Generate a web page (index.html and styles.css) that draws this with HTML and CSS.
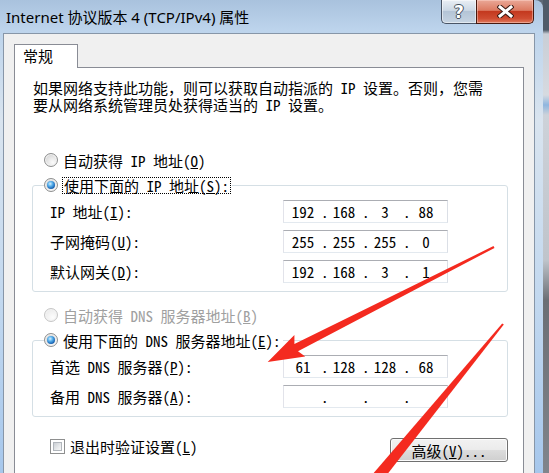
FILE: index.html
```html
<!DOCTYPE html>
<html lang="zh-CN">
<head>
    <meta charset="UTF-8">
    <meta name="viewport" content="width=device-width, initial-scale=1.0">
    <title>Internet 协议版本 4 (TCP/IPv4) 属性</title>
    <link rel="stylesheet" href="styles.css">
</head>
<body>
    <div class="screen">
        <div class="window">
            <div class="titlebar">
                <span class="title">Internet 协议版本 4 (TCP/IPv4) 属性</span>
                <div class="caption">
                    <span class="cap-btn help">?</span>
                    <span class="cap-btn close">
                        <svg width="17" height="13" viewBox="0 0 17 13">
                            <path d="M3 2 L14 11 M14 2 L3 11" stroke="#3a1a14" stroke-width="5" stroke-linecap="square"/>
                            <path d="M3 2 L14 11 M14 2 L3 11" stroke="#ffffff" stroke-width="3" stroke-linecap="square"/>
                        </svg>
                    </span>
                </div>
            </div>
            <div class="frame">
                <div class="client">
                    <div class="tab">常规</div>
                    <div class="panel">
                        <p class="intro">如果网络支持此功能，则可以获取自动指派的 IP 设置。否则，您需</p>
                        <p class="intro">要从网络系统管理员处获得适当的 IP 设置。</p>

                        <div class="radio-row first"><span class="radio"></span>自动获得 IP 地址(<u>O</u>)</div>
                        <fieldset class="group">
                            <legend><span class="radio on"></span><span class="focus">使用下面的 IP 地址(<u>S</u>):</span></legend>
                            <div class="field-row">
                                <label>IP 地址(<u>I</u>):</label>
                                <div class="ipbox"><span>192</span><i>.</i><span>168</span><i>.</i><span>3</span><i>.</i><span>88</span></div>
                            </div>
                            <div class="field-row">
                                <label>子网掩码(<u>U</u>):</label>
                                <div class="ipbox"><span>255</span><i>.</i><span>255</span><i>.</i><span>255</span><i>.</i><span>0</span></div>
                            </div>
                            <div class="field-row">
                                <label>默认网关(<u>D</u>):</label>
                                <div class="ipbox"><span>192</span><i>.</i><span>168</span><i>.</i><span>3</span><i>.</i><span>1</span></div>
                            </div>
                        </fieldset>

                        <div class="radio-row disabled"><span class="radio"></span>自动获得 DNS 服务器地址(<u>B</u>)</div>
                        <fieldset class="group">
                            <legend><span class="radio on"></span><span>使用下面的 DNS 服务器地址(<u>E</u>):</span></legend>
                            <div class="field-row">
                                <label>首选 DNS 服务器(<u>P</u>):</label>
                                <div class="ipbox"><span>61</span><i>.</i><span>128</span><i>.</i><span>128</span><i>.</i><span>68</span></div>
                            </div>
                            <div class="field-row">
                                <label>备用 DNS 服务器(<u>A</u>):</label>
                                <div class="ipbox"><span></span><i>.</i><span></span><i>.</i><span></span><i>.</i><span></span></div>
                            </div>
                        </fieldset>

                        <div class="bottom-row">
                            <div class="check-row"><span class="checkbox"></span>退出时验证设置(<u>L</u>)</div>
                            <button type="button" class="btn">高级(<u>V</u>)...</button>
                        </div>
                    </div>
                </div>
            </div>
        </div>
        <div class="backdrop"></div>

        <svg class="marks" width="549" height="473" viewBox="0 0 549 473">
            <polygon fill="#f42a1f" points="493.5,246.1 294.4,344 294.4,335.1 267.7,362.1 305.2,356.5 298,351.2 494.5,247.9"/>
            <polygon fill="#f42a1f" points="503.8,324.6 377.8,486.5 368.6,478.9 502.2,323.4"/>
        </svg>
    </div>
</body>
</html>
```

FILE: styles.css
```css
body {
    margin: 0;
    background: #5d6876;
}
.screen {
    position: relative;
    display: flex;
    width: 549px;
    height: 473px;
    overflow: hidden;
    font-family: "Noto Sans Mono CJK SC", "Noto Sans CJK SC", monospace;
    font-size: 15px;
    color: #000;
}
.window {
    width: 543px;
    display: flex;
    flex-direction: column;
    background: linear-gradient(to bottom, #a9c2dd 0, #bdd4ec 30px, #d9e4ef 120px, #c2d8ef 300px, #a6c7ec 473px);
    border-radius: 0 8px 0 0;
}
.backdrop {
    flex: 1;
    background: linear-gradient(to bottom, #4f5b69 0, #4f5b69 30px, #c9ced6 34px, #d6dae0 95px, #8fb6df 105px, #cdd2d9 115px, #bfc4cb 260px, #6b6f75 300px, #80858c 473px);
}
.titlebar {
    height: 33px;
    display: flex;
    justify-content: space-between;
    align-items: flex-start;
    padding: 0 9px 0 6px;
}
.title {
    font-family: "Noto Sans", "Noto Sans CJK SC", sans-serif;
    font-size: 15px;
    line-height: 20px;
    margin-top: 7px;
}
.caption {
    display: flex;
}
.cap-btn {
    height: 24px;
    display: flex;
    align-items: center;
    justify-content: center;
    box-sizing: border-box;
    border: 1px solid #4a5566;
    border-top: none;
}
.help {
    width: 35px;
    border-radius: 0 0 0 5px;
    border-right: none;
    background: linear-gradient(to bottom, #e9eef4 0, #ccd8e5 45%, #b4c4d6 50%, #c6d4e2 100%);
    box-shadow: inset 0 0 0 1px rgba(255, 255, 255, 0.5);
    font-family: "DejaVu Sans", sans-serif;
    font-weight: bold;
    font-size: 17px;
    color: #fff;
    text-shadow: 1px 0 0 #45505e, -1px 0 0 #45505e, 0 1px 0 #45505e, 0 -1px 0 #45505e;
}
.close {
    width: 58px;
    border-color: #47190f;
    border-radius: 0 0 5px 0;
    background: linear-gradient(to bottom, #eaa897 0, #dc7a62 45%, #c4391f 50%, #cf4c31 80%, #e07a5d 100%);
    box-shadow: inset 0 0 0 1px rgba(255, 220, 210, 0.45);
}
.frame {
    flex: 1;
    display: flex;
    padding: 0 8px 0 3px;
}
.client {
    flex: 1;
    display: flex;
    flex-direction: column;
    align-items: flex-start;
    background: #f0f0f0;
    border: 1px solid #8796a8;
    border-bottom: none;
    padding: 10px 10px 0 10px;
}
.tab {
    position: relative;
    z-index: 1;
    box-sizing: border-box;
    width: 64px;
    height: 24px;
    margin-bottom: -1px;
    padding-left: 8px;
    line-height: 22px;
    background: #fff;
    border: 1px solid #898c95;
    border-bottom: none;
}
.panel {
    flex: 1;
    box-sizing: border-box;
    width: 510px;
    background: #fff;
    border: 1px solid #898c95;
    border-bottom: none;
    padding: 11px 15px 0 17px;
}
.intro {
    margin: 0 0 0 1px;
    height: 17px;
    line-height: 17px;
    white-space: nowrap;
}
.radio-row {
    display: flex;
    align-items: center;
    height: 18px;
    padding-left: 12px;
    white-space: nowrap;
}
.radio-row.first {
    margin-top: 38px;
}
.radio-row.disabled {
    margin-top: 14px;
    color: #a0a0a0;
}
.radio {
    position: relative;
    flex: none;
    box-sizing: border-box;
    width: 14px;
    height: 14px;
    margin-right: 5px;
    border-radius: 50%;
    border: 1px solid #8e8f8f;
    background: radial-gradient(circle at 65% 70%, #fbfbfb 0, #e6e6e6 45%, #c9c9c9 100%);
    box-shadow: inset 0 0 0 1px #f4f4f4;
}
.disabled .radio {
    border-color: #c6c6c6;
    background: radial-gradient(circle at 65% 70%, #fdfdfd 0, #efefef 60%, #e2e2e2 100%);
}
.radio.on::after {
    content: "";
    position: absolute;
    left: 2px;
    top: 2px;
    width: 8px;
    height: 8px;
    border-radius: 50%;
    background: radial-gradient(circle at 40% 35%, #d6f0ff 0, #55aeea 35%, #1a64b4 70%, #0b3d75 100%);
}
.group {
    margin: 7px 0 0 0;
    box-sizing: border-box;
    width: 476px;
    padding: 6px 0 8px 0;
    border: 1px solid #d5dfe5;
    border-radius: 3px;
}
.group legend {
    display: flex;
    align-items: center;
    height: 18px;
    margin-left: 11px;
    padding: 0 2px 0 0;
    white-space: nowrap;
}
.focus {
    outline: 1px dotted #000;
    outline-offset: 0;
    padding: 0 1px;
    line-height: 15px;
}
.field-row {
    display: flex;
    align-items: center;
    height: 23px;
    padding-left: 17px;
    white-space: nowrap;
}
.field-row + .field-row {
    margin-top: 7px;
}
.field-row label {
    width: 233px;
}
.ipbox {
    box-sizing: border-box;
    display: flex;
    align-items: center;
    width: 165px;
    height: 23px;
    padding-left: 1px;
    border: 1px solid;
    border-color: #abadb3 #dbdfe6 #e3e9ef #e2e3ea;
    background: #fff;
}
.ipbox span {
    width: 36px;
    text-align: center;
}
.ipbox i {
    width: 5px;
    font-style: normal;
    text-align: center;
}
.bottom-row {
    display: flex;
    justify-content: space-between;
    align-items: flex-start;
    width: 476px;
    margin-top: 21px;
}
.check-row {
    display: flex;
    align-items: center;
    height: 16px;
    padding-left: 18px;
    white-space: nowrap;
}
.checkbox {
    position: relative;
    flex: none;
    box-sizing: border-box;
    width: 15px;
    height: 15px;
    margin-right: 5px;
    border: 1px solid #8e8f8f;
    background: #fff;
}
.checkbox::after {
    content: "";
    position: absolute;
    left: 2px;
    top: 2px;
    width: 7px;
    height: 7px;
    border: 1px solid #b1b6bc;
    background: linear-gradient(135deg, #cbcfd4 0, #e8eaec 60%, #f7f7f7 100%);
}
.btn {
    box-sizing: border-box;
    width: 118px;
    height: 24px;
    padding: 0;
    border: 1px solid #707070;
    border-radius: 3px;
    background: linear-gradient(to bottom, #f2f2f2 0, #ebebeb 50%, #dddddd 50%, #cfcfcf 100%);
    box-shadow: inset 0 0 0 1px #fcfcfc;
    font-family: inherit;
    font-size: 15px;
    color: #000;
}
.marks {
    position: absolute;
    left: 0;
    top: 0;
    pointer-events: none;
}
```
